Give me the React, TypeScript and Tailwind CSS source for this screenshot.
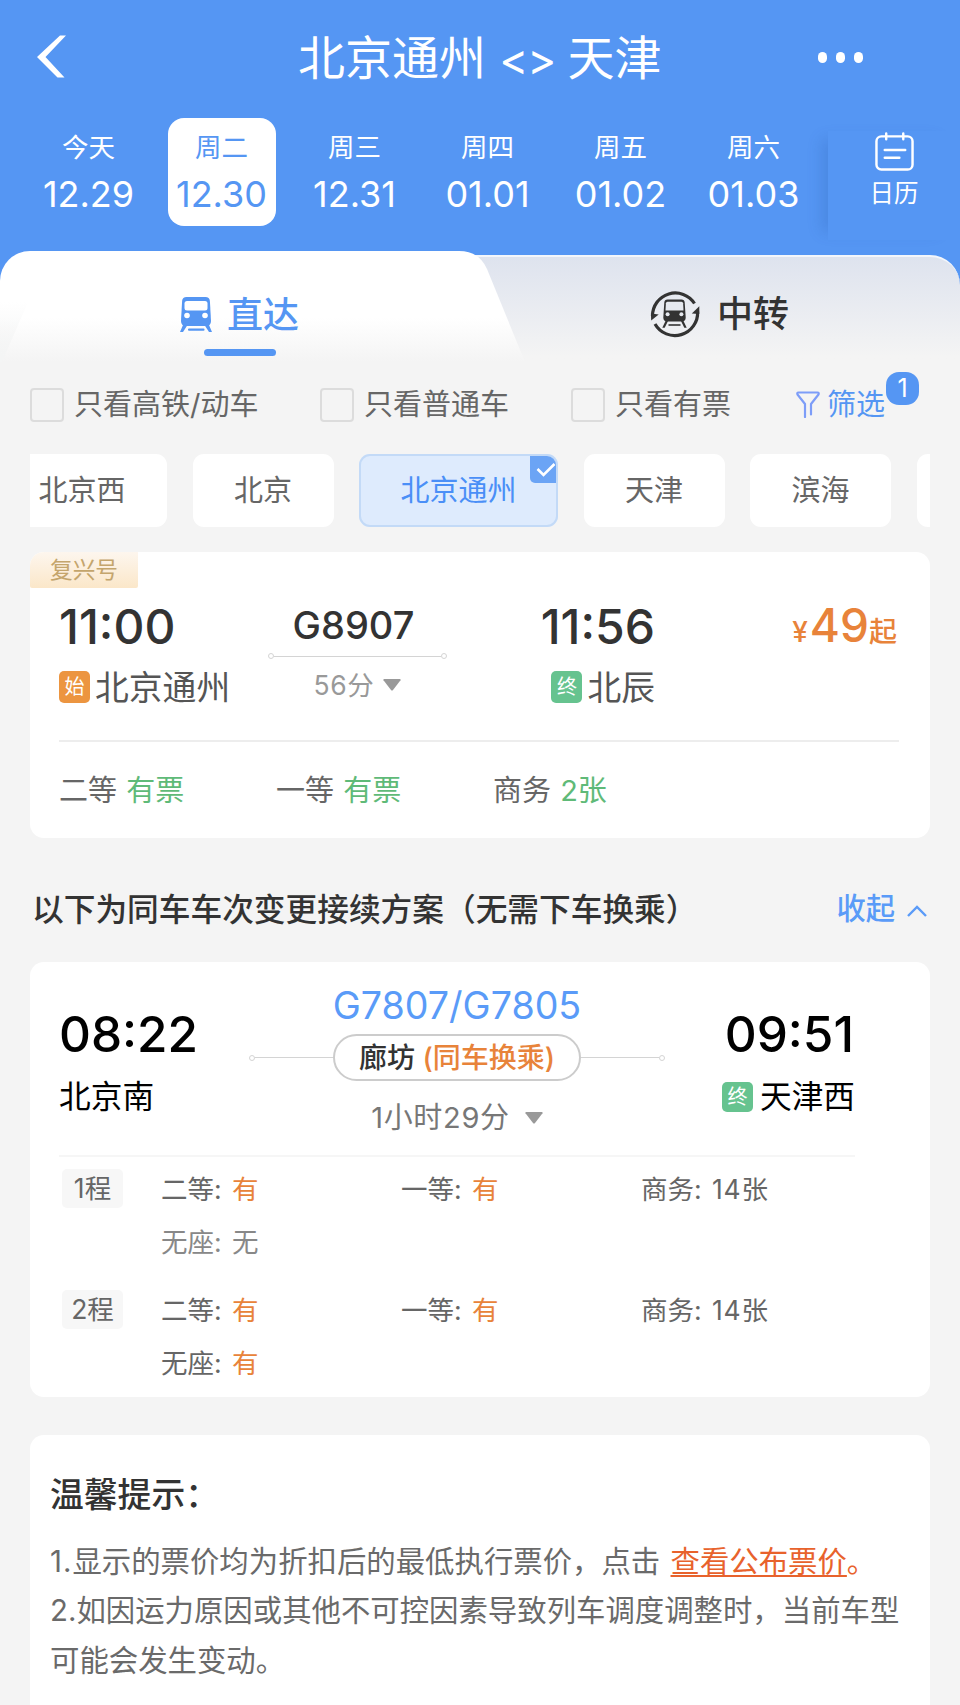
import type { ReactNode } from 'react';

const days = [
  { week: '今天', date: '12.29' },
  { week: '周二', date: '12.30', active: true },
  { week: '周三', date: '12.31' },
  { week: '周四', date: '01.01' },
  { week: '周五', date: '01.02' },
  { week: '周六', date: '01.03' },
];

const stations = [
  { name: '北京西' },
  { name: '北京' },
  { name: '北京通州', active: true },
  { name: '天津' },
  { name: '滨海' },
];

const legs = [
  {
    label: '1程',
    seats: [
      { name: '二等', left: '有' },
      { name: '一等', left: '有' },
      { name: '商务', left: '14张' },
      { name: '无座', left: '无' },
    ],
  },
  {
    label: '2程',
    seats: [
      { name: '二等', left: '有' },
      { name: '一等', left: '有' },
      { name: '商务', left: '14张' },
      { name: '无座', left: '有' },
    ],
  },
];

function TrainIcon({ className }: { className: string }) {
  return (
    <svg viewBox="0 0 32 36" className={className} fill="currentColor">
      <path d="M6.500 0h19q4 0 4.400 4l1.100 20q0 5-5 5H6q-5 0-5-5L2.100 4q.4-4 4.400-4z" />
      <path d="M7 4h18q2.500 0 2.500 2.500v4.500q0 2.500-2.500 2.500H7q-2.500 0-2.500-2.500V6.500Q4.500 4 7 4z" fill="#fff" />
      <circle cx="7" cy="18.500" r="2.800" fill="#fff" />
      <circle cx="25" cy="18.500" r="2.800" fill="#fff" />
      <path d="M3 28h4.500l-4.500 7H0zM29 28h-4.500l4.500 7h3z" />
      <rect x="8" y="31.500" width="16.500" height="2.200" rx="1" />
    </svg>
  );
}

function TransferIcon() {
  return (
    <svg viewBox="0 0 50 50" className="h-[50px] w-[50px] text-[#333]" fill="none">
      <path d="M2.500 27A22.800 22.800 0 0 1 44.500 14.500" stroke="currentColor" strokeWidth="3.200" />
      <path d="M47.600 22.500A22.800 22.800 0 0 1 5 35" stroke="currentColor" strokeWidth="3.200" />
      <path d="M.9 24.500l7.800 1L1.200 31.500z" fill="currentColor" />
      <path d="M49.300 25l-7.500-.5 7.500-7.200z" fill="currentColor" />
      <g fill="currentColor">
        <path d="M17.500 10.500h14q3 0 3.200 3l1 15q0 4-4 4H17.300q-4 0-4-4l1-15q.2-3 3.200-3z" />
        <path d="M17.500 12.700h14q1.500 0 1.600 1.500l.4 7.300H15.500l.4-7.300q.1-1.500 1.600-1.500z" fill="#e6e9ef" />
        <circle cx="17.600" cy="25.300" r="2" fill="#e6e9ef" />
        <circle cx="31.400" cy="25.300" r="2" fill="#e6e9ef" />
        <path d="M15.500 32h2.500l-3.300 6.700h-2.400zM33.500 32H31l3.300 6.700h2.400z" />
        <rect x="18.500" y="35" width="12" height="2" opacity="0.8" />
      </g>
    </svg>
  );
}

function CheckOption({ label, className }: { label: string; className: string }) {
  return (
    <label className={`flex items-center ${className}`}>
      <span className="h-[34px] w-[34px] shrink-0 rounded-[4px] border-2 border-[#dcdcdc]" />
      <span className="ml-[10px] whitespace-nowrap">{label}</span>
    </label>
  );
}

function EndTag({ children, className }: { children: ReactNode; className: string }) {
  return (
    <span className={`flex w-[31px] items-center justify-center rounded-[5px] text-[20px] text-white ${className}`}>
      {children}
    </span>
  );
}

function Dot() {
  return <span className="h-[6px] w-[6px] shrink-0 rounded-full border-[1.500px] border-[#d4d4d4]" />;
}

function DownArrow({ className }: { className: string }) {
  return (
    <svg viewBox="0 0 18 12" className={`h-[12px] w-[18px] ${className}`}>
      <path d="M1 0h16q1 .3.500 1.200L10 11q-1 1-2 0L.5 1.200Q0 .3 1 0z" fill="#999" />
    </svg>
  );
}

function Header() {
  return (
    <header className="h-[251px] text-white">
      <div className="grid h-[118px] grid-cols-[298px_1fr_298px] items-center pb-1">
        <svg viewBox="0 0 30 44" className="ml-[37px] h-[44px] w-[30px]" fill="#fff">
          <path d="M23 0.500h6L8.500 22 27.500 42.500h-7L0 22z" />
        </svg>
        <h1 className="pt-[3px] text-[47px] leading-[60px] whitespace-nowrap">
          北京通州 <span className="inline-block w-[55px] text-[44px] tracking-[-1px]">&lt;&gt;</span> 天津
        </h1>
        <div className="ml-[156px] flex gap-[9px]">
          <span className="h-[11px] w-[9px] rounded-full bg-white" />
          <span className="h-[11px] w-[9px] rounded-full bg-white" />
          <span className="h-[11px] w-[9px] rounded-full bg-white" />
        </div>
      </div>
      <div className="flex pl-[22px]">
        {days.map((d) => (
          <div key={d.date} className="flex w-[133px] shrink-0 justify-center">
            <div className={`h-[108px] w-[108px] rounded-[16px] pt-[9px] text-center ${d.active ? 'bg-white text-[#5596f3]' : ''}`}>
              <div className="text-[26.500px] leading-[40px]">{d.week}</div>
              <div className="pt-px text-[36px] leading-[52px]">{d.date}</div>
            </div>
          </div>
        ))}
        <div className="mt-[13px] ml-[8px] flex h-[109px] w-[132px] flex-col items-center bg-[#5596f3] pt-px shadow-[-14px_0_14px_-8px_rgba(30,80,160,0.2)]">
          <svg viewBox="0 0 40 40" className="h-[39px] w-[39px]" fill="none" stroke="#fff" strokeWidth="2.500" strokeLinecap="round">
            <rect x="1.500" y="4.500" width="37" height="34" rx="5" />
            <path d="M11.500 1.500v6M29 1.500v6M10 18.500h21M10 26.500h15" />
          </svg>
          <div className="mt-[5px] text-[24.500px] leading-[34px]">日历</div>
        </div>
      </div>
    </header>
  );
}

function Tabs() {
  return (
    <div className="flex h-[111px]">
      <div className="relative w-[460px] shrink-0 rounded-tl-[30px] bg-gradient-to-b from-white from-60% to-[#f4f4f4]">
        <svg viewBox="0 0 66 111" className="absolute top-0 left-[459px] h-[111px] w-[66px]">
          <defs>
            <linearGradient id="edge" x1="0" y1="0" x2="0" y2="1">
              <stop offset="0.6" stopColor="#fff" />
              <stop offset="1" stopColor="#f4f4f4" />
            </linearGradient>
          </defs>
          <path d="M0 0Q20 0 28 18L66 111H0z" fill="url(#edge)" />
        </svg>
        <svg viewBox="0 0 28 60" className="absolute bottom-0 left-0 h-[60px] w-[28px]">
          <defs>
            <linearGradient id="corner" x1="0" y1="0" x2="0" y2="1">
              <stop offset="0" stopColor="#f4f5f5" stopOpacity="0" />
              <stop offset="0.9" stopColor="#f4f5f5" />
            </linearGradient>
          </defs>
          <path d="M0 0h28L2 60H0z" fill="url(#corner)" />
        </svg>
        <div className="flex h-[98px] items-center pt-[29px] pl-[180px] text-[#5596f3]">
          <TrainIcon className="h-[36px] w-[32px]" />
          <span className="ml-[15px] text-[36px] leading-[40px] font-medium">直达</span>
        </div>
        <div className="ml-[204px] h-[7px] w-[72px] rounded-full bg-[#5596f3]" />
      </div>
      <div className="-ml-5 mt-1 flex flex-1 items-start rounded-tr-[30px] border-t-2 border-[#f3f6fb] bg-gradient-to-b from-[#dee3ee] to-[#f4f4f4] to-95% pt-[32px] pl-[210px] text-[#333]">
        <TransferIcon />
        <span className="ml-[17px] text-[36px] leading-[50px] font-medium">中转</span>
      </div>
    </div>
  );
}

function Filters() {
  return (
    <div className="flex h-[92px] items-center pb-[7px] pl-[30px] text-[29px] leading-[40px] text-[#666]">
      <CheckOption label="只看高铁/动车" className="w-[290px]" />
      <CheckOption label="只看普通车" className="w-[251px]" />
      <CheckOption label="只看有票" className="w-[225px]" />
      <div className="relative flex items-center text-[#5596f3]">
        <svg viewBox="0 0 24 27" className="h-[27px] w-[24px]" fill="none" stroke="#7d9df8" strokeWidth="2.200" strokeLinecap="round" strokeLinejoin="round">
          <path d="M9 26V13L1.500 3.500Q.8 1.500 2.500 1.500h19q1.700 0 1 2L15 13v10.500" />
        </svg>
        <span className="ml-[7px]">筛选</span>
        <span className="absolute -top-[13px] left-[90px] flex h-[33px] w-[33px] items-center justify-center rounded-[13px] bg-[#5596f3] text-[25px] text-white">
          1
        </span>
      </div>
    </div>
  );
}

function StationChips() {
  return (
    <div className="mx-[30px] overflow-hidden">
      <div className="-ml-[33px] flex gap-[25.500px] text-[29px] leading-[74px] text-[#666]">
        {stations.map((s) => (
          <div
            key={s.name}
            className={`relative h-[73px] shrink-0 rounded-[11px] px-[41.500px] ${
              s.active ? 'bg-[#deebfd] text-[#4a8ff7] shadow-[inset_0_0_0_2px_#c3daf7]' : 'bg-white'
            }`}
          >
            {s.name}
            {s.active && (
              <span className="absolute top-[2px] right-[2px] flex h-[27px] w-[26px] items-center justify-center rounded-tr-[9px] rounded-bl-[5px] bg-[#6ba4f5]">
                <svg viewBox="0 0 20 16" className="ml-[5px] h-[16px] w-[20px]" fill="none" stroke="#fff" strokeWidth="2.600">
                  <path d="M1.500 7l6 6L18.500 2" />
                </svg>
              </span>
            )}
          </div>
        ))}
        {/* next station, scrolled out of view */}
        <div className="h-[73px] w-[141px] shrink-0 rounded-[11px] bg-white" />
      </div>
    </div>
  );
}

function DirectCard() {
  return (
    <section className="mx-[30px] mt-[25px] h-[286px] overflow-hidden rounded-[14px] bg-white">
      <div className="h-[36px] w-[108px] rounded-b-[2px] bg-gradient-to-b from-[#fdf6ee] to-[#fbe7c9] pl-[20px] text-[22.700px] leading-[35px] text-[#c4a56c]">
        复兴号
      </div>
      <div className="ml-[29px] flex h-[154px] w-[840px] border-b-2 border-[#ededed] pt-[10px]">
        <div className="w-[209px]">
          <div className="text-[48px] leading-[58px] font-medium text-[#333]">11:00</div>
          <div className="mt-[14px] flex h-[34px] items-center text-[33.800px] leading-[34px] text-[#555]">
            <EndTag className="h-[32px] bg-[#ec9540]">始</EndTag>
            <span className="relative top-px ml-[5px]">北京通州</span>
          </div>
        </div>
        <div className="w-[179px] text-center">
          <div className="pt-[2px] text-[38px] leading-[50px] font-medium text-[#333]">
            <span className="relative -left-[4px]">G8907</span>
          </div>
          <div className="mt-[3px] flex items-center">
            <Dot />
            <span className="h-px flex-1 bg-[#d4d4d4]" />
            <Dot />
          </div>
          <div className="mt-[5px] flex items-center justify-center text-[26.500px] leading-[42px] tracking-[0.600px] text-[#999]">
            56分
            <DownArrow className="ml-[9px]" />
          </div>
        </div>
        <div className="flex w-[208px] flex-col items-end">
          <div className="text-[48px] leading-[58px] font-medium text-[#333]">11:56</div>
          <div className="mt-[14px] flex h-[34px] items-center text-[33.800px] leading-[34px] text-[#555]">
            <EndTag className="h-[32px] bg-[#66c38f]">终</EndTag>
            <span className="relative top-px ml-[5px]">北辰</span>
          </div>
        </div>
        <div className="flex flex-1 items-baseline justify-end pr-[2px] text-[#e8833a]">
          <span className="mr-[2px] text-[28px] leading-[58px] font-medium">¥</span>
          <span className="text-[46px] leading-[54px] font-medium">49</span>
          <span className="text-[28px] font-medium">起</span>
        </div>
      </div>
      <div className="flex pl-[29px] text-[29px] leading-[98px] text-[#666]">
        <div className="w-[217px]">二等 <span className="ml-px text-[#5fba78]">有票</span></div>
        <div className="w-[217px]">一等 <span className="ml-px text-[#5fba78]">有票</span></div>
        <div>商务 <span className="ml-px text-[#5fba78]">2张</span></div>
      </div>
    </section>
  );
}

function SameTrainCard() {
  return (
    <section className="mx-[30px] h-[435px] rounded-[14px] bg-white pl-[29px]">
      <div className="flex h-[195px] w-[796px] border-b-2 border-[#f6f6f6] text-black">
        <div className="w-[190px] pt-[42px]">
          <div className="text-[49.500px] leading-[60px] font-medium">08:22</div>
          <div className="mt-[13px] text-[31.700px] leading-[40px]">北京南</div>
        </div>
        <div className="w-[416px] pt-[19px] text-center">
          <div className="text-[37.600px] leading-[50px] text-[#5a9bf8]">G7807/G7805</div>
          <div className="mt-[3px] flex items-center">
            <Dot />
            <span className="h-px flex-1 bg-[#d4d4d4]" />
            <span className="h-[47px] w-[248px] rounded-full border-2 border-[#ccc] text-[28px] leading-[44px] font-medium whitespace-nowrap text-[#333]">
              廊坊 <span className="text-[#e8833a]">(同车换乘)</span>
            </span>
            <span className="h-px flex-1 bg-[#d4d4d4]" />
            <Dot />
          </div>
          <div className="mt-[16px] flex items-center justify-center text-[29px] leading-[42px] tracking-[0.700px] text-[#777]">
            1小时29分
            <DownArrow className="ml-[15px]" />
          </div>
        </div>
        <div className="flex flex-1 flex-col items-end pt-[42px]">
          <div className="pr-px text-[49.500px] leading-[60px] font-medium">09:51</div>
          <div className="mt-[13px] flex items-center text-[31.700px] leading-[40px]">
            <EndTag className="h-[30px] bg-[#66c38f]">终</EndTag>
            <span className="ml-[7px]">天津西</span>
          </div>
        </div>
      </div>
      {legs.map((leg) => (
        <div key={leg.label} className="flex h-[120.500px] pt-[12px] pl-[3px] text-[26.500px] text-[#666]">
          <div className="h-[39px] w-[61px] rounded-[5px] bg-[#f7f7f7] text-center leading-[39px]">{leg.label}</div>
          <div className="-mt-px ml-[38px] grid h-[106px] grid-cols-[240px_240px_200px] leading-[42px]">
            {leg.seats.map((s) => (
              <div key={s.name} className={s.left === '无' ? 'text-[#888]' : ''}>
                {s.name}:{' '}
                <span className={s.left === '有' ? 'ml-[3px] text-[#e8833a]' : 'ml-[3px] tracking-[0.700px]'}>{s.left}</span>
              </div>
            ))}
          </div>
        </div>
      ))}
    </section>
  );
}

function Tips() {
  return (
    <section className="mx-[30px] mt-[38px] h-[300px] rounded-[14px] bg-white px-[20px] pt-[36px]">
      <h2 className="text-[33.800px] leading-[48px] font-medium text-[#333]">温馨提示：</h2>
      <div className="mt-[18px] text-[29.400px] leading-[49.300px] whitespace-nowrap text-[#6a6a6a]">
        <p>
          <span className="tracking-[1px]">1.</span>显示的票价均为折扣后的最低执行票价，点击{' '}
          <span className="ml-[2px] text-[#e8622c]">
            <a className="underline decoration-2 underline-offset-[3px]">查看公布票价</a>。
          </span>
        </p>
        <p>2.如因运力原因或其他不可控因素导致列车调度调整时，当前车型</p>
        <p>可能会发生变动。</p>
      </div>
    </section>
  );
}

export default function App() {
  return (
    <div className="h-[1705px] w-[960px] overflow-hidden bg-[#f4f4f4] font-['Inter','Noto_Sans_CJK_SC',sans-serif]">
      <div className="bg-[#5596f3]">
        <Header />
        <Tabs />
      </div>
      <Filters />
      <StationChips />
      <DirectCard />
      <div className="flex h-[124px] items-center justify-between pt-[20px] pr-[33px] pl-[32px]">
        <h2 className="text-[31.700px] leading-[40px] font-medium text-[#333]">以下为同车车次变更接续方案（无需下车换乘）</h2>
        <div className="-mt-[2px] flex items-center text-[29.300px] leading-[40px] font-medium text-[#5a9bf8]">
          收起
          <svg viewBox="0 0 20 12" className="mt-1 ml-[12px] h-[12px] w-[20px]" fill="none" stroke="currentColor" strokeWidth="2.400">
            <path d="M1 11l9-9 9 9" />
          </svg>
        </div>
      </div>
      <SameTrainCard />
      <Tips />
    </div>
  );
}
